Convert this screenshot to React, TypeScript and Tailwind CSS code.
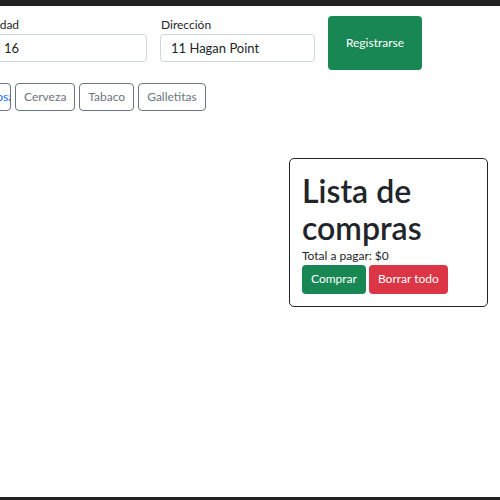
export default function App() {
  const font = { fontFamily: 'Lato, "Noto Sans", sans-serif' }
  return (
    <div className="w-[500px] h-[500px] overflow-hidden bg-white flex flex-col" style={font}>
      {/* top bar */}
      <div className="h-[6px] bg-[#222] shrink-0" />

      <div className="flex-1 flex flex-col">
        {/* form row */}
        <div className="flex items-start gap-[13px] mt-[10px] ml-[-8px]">
          <div className="flex flex-col w-[155px]">
            <label className="text-[12px] leading-[18px] text-[#212529] pl-[1px]">Edad</label>
            <input readOnly value="16" className="h-[28px] border border-[#ced4da] rounded-[4px] px-[11px] text-[13px] text-[#212529] outline-none" />
          </div>
          <div className="flex flex-col w-[155px]">
            <label className="text-[12px] leading-[18px] text-[#212529] pl-[1px]">Dirección</label>
            <input readOnly value="11 Hagan Point" className="h-[28px] border border-[#ced4da] rounded-[4px] px-[10px] text-[13px] text-[#212529] outline-none" />
          </div>
          <button className="w-[94px] h-[54px] bg-[#198754] text-white text-[12px] rounded-[4px]">Registrarse</button>
        </div>

        {/* category buttons */}
        <div className="flex gap-[4px] mt-[13px] ml-[-39px]">
          {["Gaseosa", "Cerveza", "Tabaco", "Galletitas"].map((c, i) => (
            <button
              key={c}
              className={
                "h-[28px] px-[8px] border border-[#6c757d] rounded-[4px] text-[12px] " +
                (i === 0 ? "w-[50px] text-[#0d6efd] overflow-hidden whitespace-nowrap text-right" : "text-[#6c757d]")
              }
            >
              {c}
            </button>
          ))}
        </div>

        {/* shopping list */}
        <div className="self-end mr-[12px] mt-[47px] w-[199px] border border-[#212529] rounded-[5px] px-[12px] pt-[13px] pb-[12px]">
          <h1 className="text-[32px] leading-[1.17] font-semibold text-[#212529]">Lista de compras</h1>
          <p className="text-[12px] leading-[18px] text-[#212529]">Total a pagar: $0</p>
          <div className="flex gap-[3px]">
            <button className="h-[29px] px-[9px] bg-[#198754] text-white text-[12px] rounded-[4px]">Comprar</button>
            <button className="h-[29px] px-[9px] bg-[#dc3545] text-white text-[12px] rounded-[4px]">Borrar todo</button>
          </div>
        </div>
      </div>

      {/* bottom bar */}
      <div className="h-[3px] bg-[#222] shrink-0" />
    </div>
  )
}
